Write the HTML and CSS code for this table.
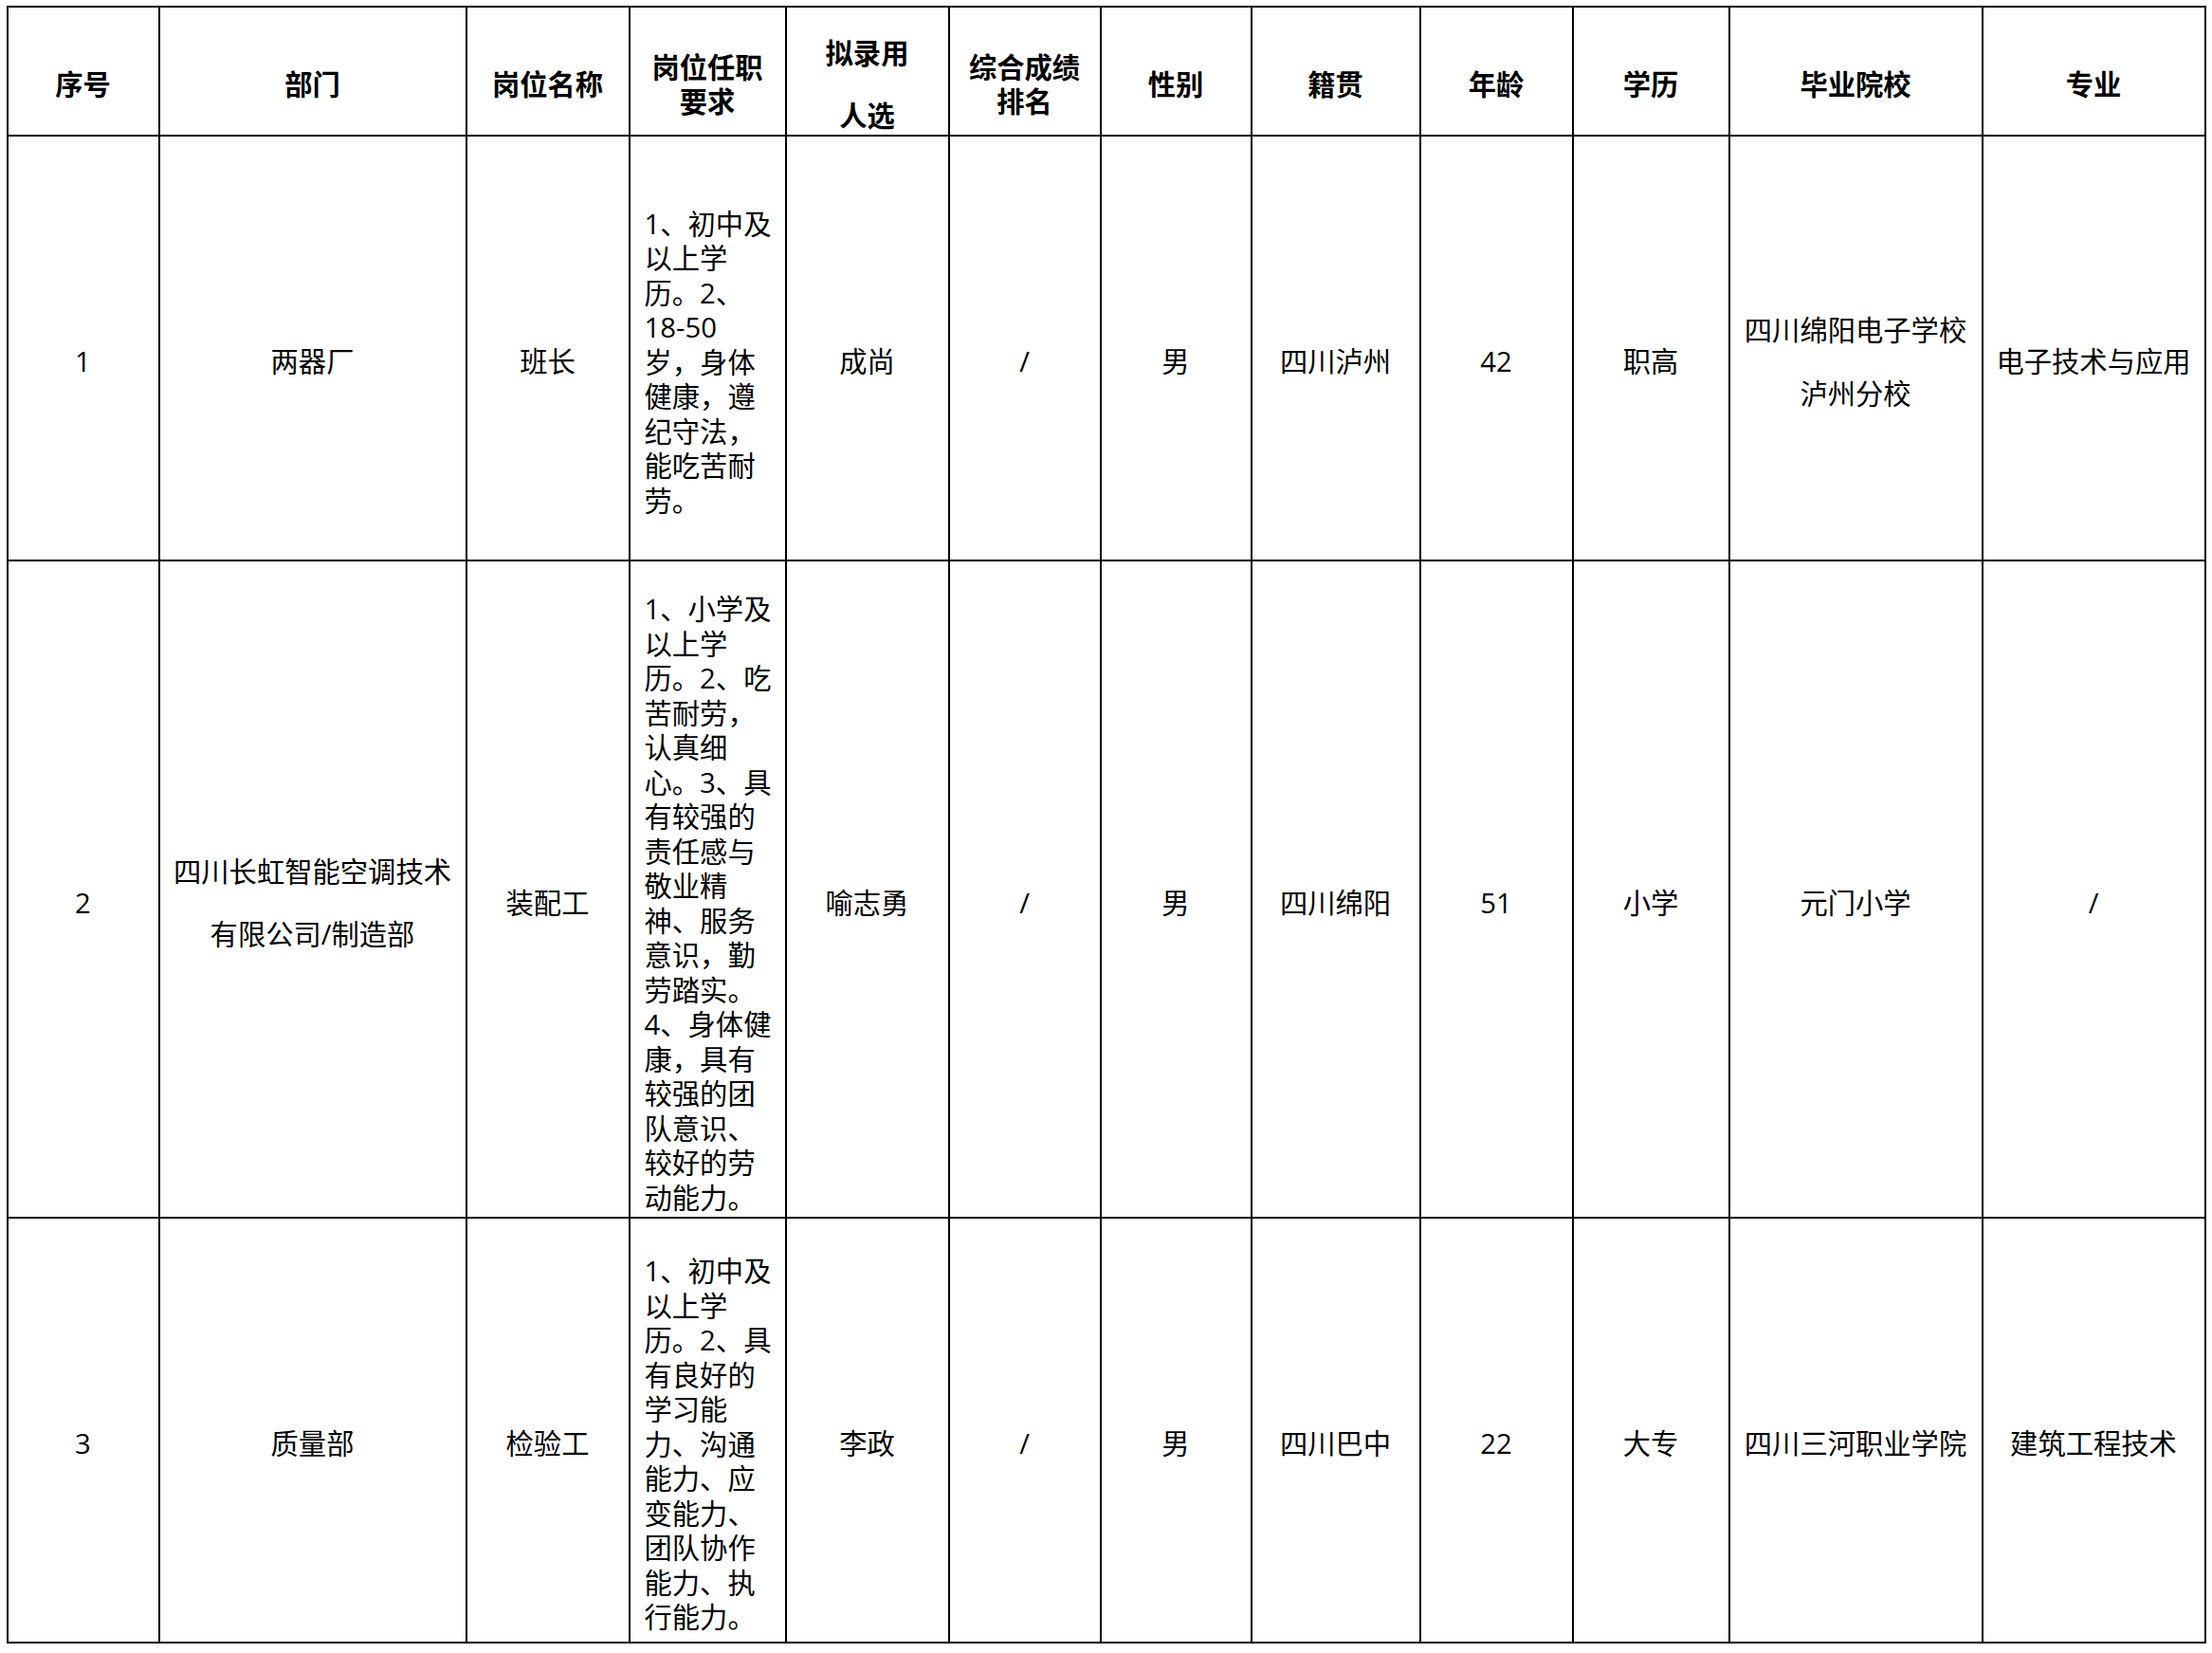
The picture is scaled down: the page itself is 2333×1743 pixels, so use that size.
FILE: index.html
```html
<!DOCTYPE html>
<html lang="zh-CN">
<head>
<meta charset="utf-8">
<title>拟录用人选</title>
<link rel="stylesheet" href="styles.css">
</head>
<body>
<table class="grid">
  <colgroup>
    <col class="c1"><col class="c2"><col class="c3"><col class="c4"><col class="c5"><col class="c6">
    <col class="c7"><col class="c8"><col class="c9"><col class="c10"><col class="c11"><col class="c12">
  </colgroup>
  <thead>
    <tr class="head">
      <th>序号</th>
      <th>部门</th>
      <th>岗位名称</th>
      <th class="tight">岗位任职<br>要求</th>
      <th class="loose-head"><div class="shift">拟录用<br>人选</div></th>
      <th class="tight">综合成绩<br>排名</th>
      <th>性别</th>
      <th>籍贯</th>
      <th>年龄</th>
      <th>学历</th>
      <th>毕业院校</th>
      <th>专业</th>
    </tr>
  </thead>
  <tbody>
    <tr class="r1">
      <td>1</td>
      <td>两器厂</td>
      <td>班长</td>
      <td class="req">1、初中及<br>以上学<br>历。2、<br>18-50<br>岁，身体<br>健康，遵<br>纪守法，<br>能吃苦耐<br>劳。</td>
      <td>成尚</td>
      <td>/</td>
      <td>男</td>
      <td>四川泸州</td>
      <td>42</td>
      <td>职高</td>
      <td class="loose">四川绵阳电子学校<br>泸州分校</td>
      <td>电子技术与应用</td>
    </tr>
    <tr class="r2">
      <td>2</td>
      <td class="loose">四川长虹智能空调技术<br>有限公司/制造部</td>
      <td>装配工</td>
      <td class="req">1、小学及<br>以上学<br>历。2、吃<br>苦耐劳，<br>认真细<br>心。3、具<br>有较强的<br>责任感与<br>敬业精<br>神、服务<br>意识，勤<br>劳踏实。<br>4、身体健<br>康，具有<br>较强的团<br>队意识、<br>较好的劳<br>动能力。</td>
      <td>喻志勇</td>
      <td>/</td>
      <td>男</td>
      <td>四川绵阳</td>
      <td>51</td>
      <td>小学</td>
      <td>元门小学</td>
      <td>/</td>
    </tr>
    <tr class="r3">
      <td>3</td>
      <td>质量部</td>
      <td>检验工</td>
      <td class="req">1、初中及<br>以上学<br>历。2、具<br>有良好的<br>学习能<br>力、沟通<br>能力、应<br>变能力、<br>团队协作<br>能力、执<br>行能力。</td>
      <td>李政</td>
      <td>/</td>
      <td>男</td>
      <td>四川巴中</td>
      <td>22</td>
      <td>大专</td>
      <td>四川三河职业学院</td>
      <td>建筑工程技术</td>
    </tr>
  </tbody>
</table>
</body>
</html>
```
FILE: styles.css
```css
html, body {
  margin: 0;
  padding: 0;
  background: #fff;
}

body {
  font-family: "Open Sans", "Noto Sans CJK SC", sans-serif;
  font-size: 29.3px;
  color: #000;
}

.grid {
  margin: 6px 0 0 6.5px;
  width: 2320px;
  table-layout: fixed;
  border-collapse: collapse;
  border: 2px solid #000;
}

.c1 { width: 160px; }
.c2 { width: 324px; }
.c3 { width: 172px; }
.c4 { width: 165px; }
.c5 { width: 172px; }
.c6 { width: 160px; }
.c7 { width: 159px; }
.c8 { width: 178px; }
.c9 { width: 161px; }
.c10 { width: 165px; }
.c11 { width: 267px; }
.c12 { width: 235px; }

.grid th,
.grid td {
  border: 2px solid #000;
  padding: 29px 2px 0;
  text-align: center;
  vertical-align: middle;
  white-space: nowrap;
  line-height: 36.5px;
  font-weight: 400;
}

.grid th {
  font-weight: 700;
}

.head { height: 136px; }
.r1 { height: 448px; }
.r2 { height: 693px; }
.r3 { height: 448px; }

.grid .tight { line-height: 35.7px; }
.grid .loose { line-height: 66.5px; }

.grid th.loose-head {
  padding: 0 2px;
}

.shift {
  line-height: 65.5px;
  margin: 14.5px 0 -14.5px;
}

.grid td.req {
  text-align: left;
  padding: 31px 4px 1px 15px;
  line-height: 36.5px;
}
```
